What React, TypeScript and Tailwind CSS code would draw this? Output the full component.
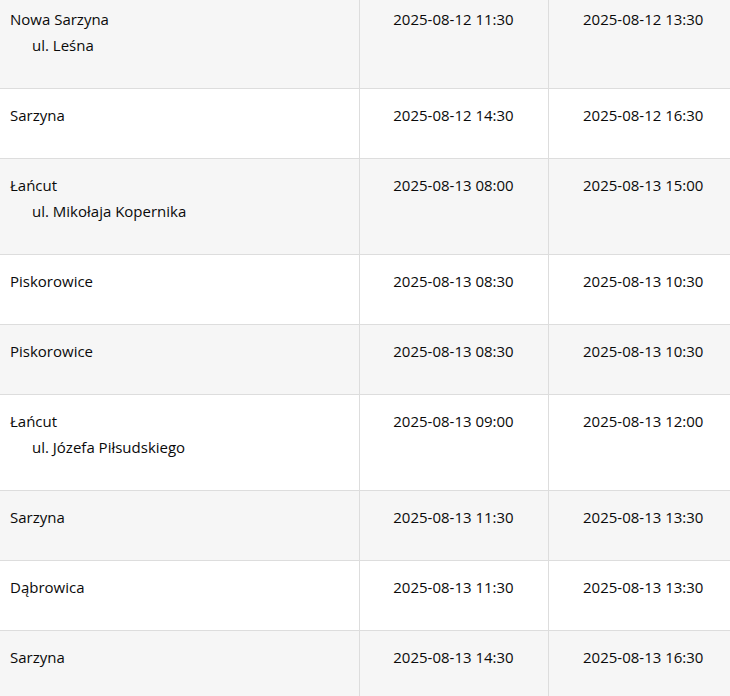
const rows: { city: string; street?: string; from: string; to: string }[] = [
  { city: "Nowa Sarzyna", street: "ul. Leśna", from: "2025-08-12 11:30", to: "2025-08-12 13:30" },
  { city: "Sarzyna", from: "2025-08-12 14:30", to: "2025-08-12 16:30" },
  { city: "Łańcut", street: "ul. Mikołaja Kopernika", from: "2025-08-13 08:00", to: "2025-08-13 15:00" },
  { city: "Piskorowice", from: "2025-08-13 08:30", to: "2025-08-13 10:30" },
  { city: "Piskorowice", from: "2025-08-13 08:30", to: "2025-08-13 10:30" },
  { city: "Łańcut", street: "ul. Józefa Piłsudskiego", from: "2025-08-13 09:00", to: "2025-08-13 12:00" },
  { city: "Sarzyna", from: "2025-08-13 11:30", to: "2025-08-13 13:30" },
  { city: "Dąbrowica", from: "2025-08-13 11:30", to: "2025-08-13 13:30" },
  { city: "Sarzyna", from: "2025-08-13 14:30", to: "2025-08-13 16:30" },
];

export default function App() {
  return (
    <div className="h-[696px] w-[730px] overflow-hidden bg-white font-['Open_Sans',sans-serif] text-[15px] leading-[26px] text-[#0a0a0a]">
      <table className="-mt-[7px] w-[738px] table-fixed border-collapse">
        <colgroup>
          <col className="w-[359px]" />
          <col className="w-[189px]" />
          <col className="w-[190px]" />
        </colgroup>
        <tbody>
          {rows.map((r, i) => (
            <tr
              key={i}
              className={`border-b border-[#dddddd] ${i % 2 === 0 ? "bg-[#f6f6f6]" : "bg-white"}`}
            >
              <td className="border-r border-[#dddddd] px-[10px] pt-[13px] pb-[30px] align-top">
                <div>{r.city}</div>
                {r.street && <div className="pl-[22px]">{r.street}</div>}
              </td>
              <td className="border-r border-[#dddddd] pt-[13px] pb-[30px] text-center align-top">
                {r.from}
              </td>
              <td className="pt-[13px] pb-[30px] text-center align-top">{r.to}</td>
            </tr>
          ))}
        </tbody>
      </table>
    </div>
  );
}
